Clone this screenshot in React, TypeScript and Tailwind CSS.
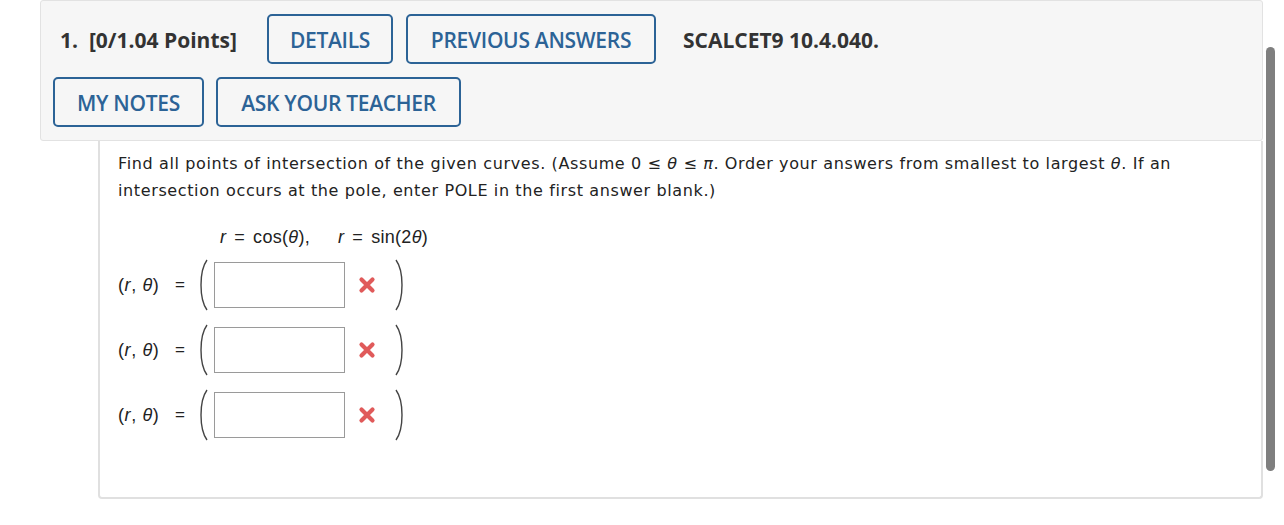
import React from 'react';

const btn =
  'h-[50px] flex items-center justify-center pt-[3px] rounded-[5px] border-2 border-[#2c6396] bg-[#f6f6f6] text-[#2c6396] text-[21px] font-semibold tracking-[-0.3px]';

function Paren({ side }: { side: 'left' | 'right' }) {
  return (
    <svg width="12" height="52" viewBox="0 0 12 52" className="shrink-0">
      {side === 'left' ? (
        <path d="M10 1 C 2 12, 2 40, 10 51" fill="none" stroke="#444" strokeWidth="1.4" />
      ) : (
        <path d="M2 1 C 10 12, 10 40, 2 51" fill="none" stroke="#444" strokeWidth="1.4" />
      )}
    </svg>
  );
}

function WrongMark() {
  return (
    <svg width="18" height="18" viewBox="0 0 18 18" className="shrink-0">
      <path d="M3.5 3.5 L14.5 14.5 M14.5 3.5 L3.5 14.5" stroke="#e05a5a" strokeWidth="4.2" strokeLinecap="round" />
    </svg>
  );
}

function AnswerRow() {
  return (
    <div className="flex items-center h-[52px]">
      <span className="w-[57px] text-[18px] text-[#222] font-['Liberation_Sans',sans-serif] tracking-[0.6px]">
        (<i>r</i>, <i>θ</i>)
      </span>
      <span className="w-[22px] text-[17px] text-[#222] font-['Liberation_Sans',sans-serif]">=</span>
      <Paren side="left" />
      <div className="ml-[5px] w-[131px] h-[46px] border border-[#9a9a9a] bg-white" />
      <div className="ml-[13px]">
        <WrongMark />
      </div>
      <div className="ml-[18px]">
        <Paren side="right" />
      </div>
    </div>
  );
}

export default function App() {
  return (
    <div className="relative w-[1284px] h-[525px] bg-white overflow-hidden font-['Open_Sans',sans-serif]">
      {/* Question header */}
      <div className="ml-[40px] w-[1223px] h-[141px] bg-[#f6f6f6] border border-[#e2e2e2] rounded-[3px] pl-[12px] pt-[13px]">
        <div className="flex items-center gap-[13px]">
          <div className="w-[201px] pl-[7px] pt-[3px] text-[21px] font-bold text-[#333] whitespace-nowrap">1.&nbsp; [0/1.04 Points]</div>
          <button className={`${btn} w-[126px]`}>DETAILS</button>
          <button className={`${btn} w-[250px]`}>PREVIOUS ANSWERS</button>
          <div className="pl-[14px] pt-[3px] text-[21px] font-bold text-[#333]">SCALCET9 10.4.040.</div>
        </div>
        <div className="flex items-center gap-[12px] mt-[13px]">
          <button className={`${btn} w-[151px]`}>MY NOTES</button>
          <button className={`${btn} w-[245px]`}>ASK YOUR TEACHER</button>
        </div>
      </div>

      {/* Question body */}
      <div className="ml-[98px] w-[1165px] h-[358px] border-2 border-t-0 border-[#e0e0e0] rounded-b-[4px] bg-white pl-[18px] pt-[9px] font-['DejaVu_Sans',sans-serif] text-[#222]">
        <p className="text-[16px] leading-[27px] w-[1100px] tracking-[0.62px]">
          Find all points of intersection of the given curves. (Assume 0 ≤ <i>θ</i> ≤ <i>π</i>. Order your answers from smallest to largest <i>θ</i>. If an intersection occurs at the pole, enter POLE in the first answer blank.)
        </p>
        <div className="mt-[20px] ml-[102px] flex items-center text-[18px] font-['Liberation_Sans',sans-serif] whitespace-pre tracking-[0.3px]">
          <i>r</i>
          <span className="mx-[8px]">=</span>
          <span>cos(<i>θ</i>),</span>
          <span className="w-[28px]" />
          <i>r</i>
          <span className="mx-[8px]">=</span>
          <span>sin(2<i>θ</i>)</span>
        </div>
        <div className="mt-[8px] flex flex-col gap-[13px]">
          <AnswerRow />
          <AnswerRow />
          <AnswerRow />
        </div>
      </div>

      {/* Scrollbar */}
      <div className="absolute left-[1266px] top-[47px] w-[9px] h-[424px] rounded-full bg-[#7f7f7f]" />
    </div>
  );
}
